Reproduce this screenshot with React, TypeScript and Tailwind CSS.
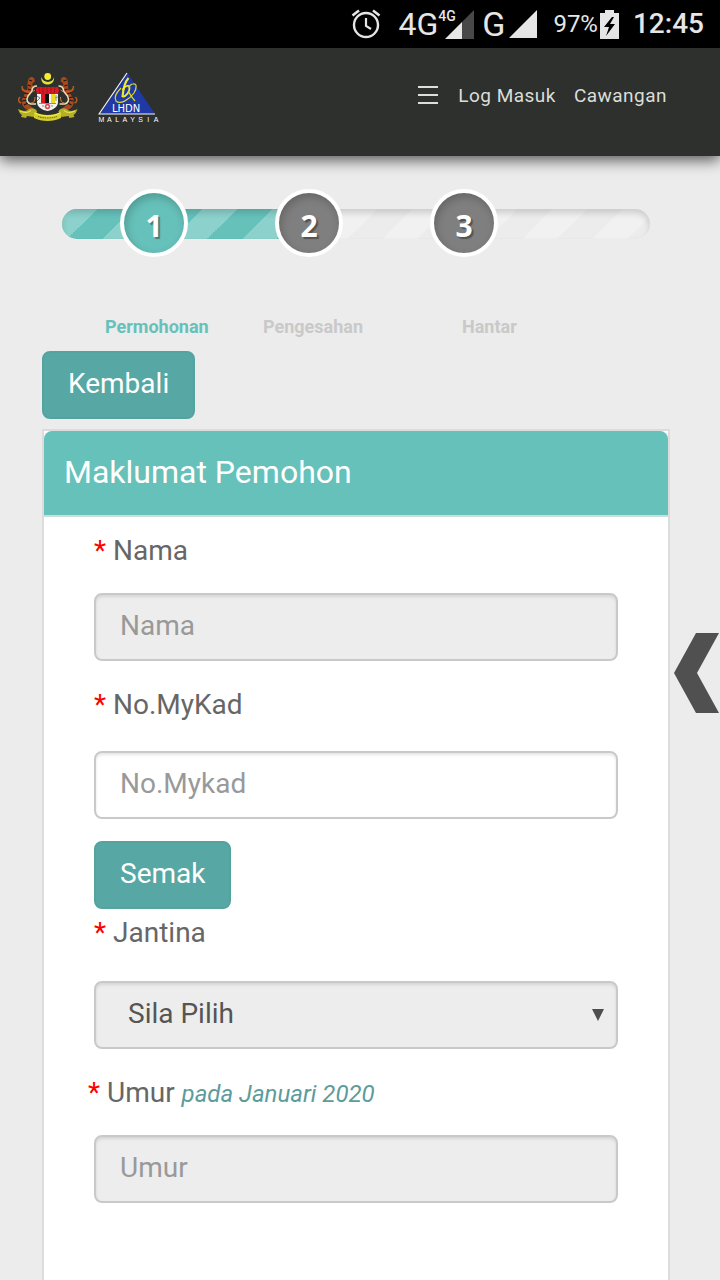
import type { ReactNode } from "react";

const STRIPES =
  "bg-[linear-gradient(135deg,rgba(255,255,255,0.25)_25%,transparent_25%,transparent_50%,rgba(255,255,255,0.25)_50%,rgba(255,255,255,0.25)_75%,transparent_75%)] bg-[length:70px_70px]";
const FIELD =
  "block h-[68px] w-full rounded-lg border-2 border-[#c9c9c9] text-[28px] shadow-[inset_0_2px_3px_rgba(0,0,0,0.1)] outline-none placeholder:text-[#999] placeholder:opacity-100";
const BUTTON =
  "h-[68px] rounded-lg border-2 border-[#54a39f] bg-[#57a7a4] px-6 pb-[2px] text-[28px] leading-10 text-white";

function AlarmIcon() {
  return (
    <svg className="h-8 w-8" viewBox="0 0 32 32" fill="none" stroke="#e6e6e6" aria-hidden="true">
      <circle cx="16" cy="17" r="12" strokeWidth="2.4" />
      <path d="M16 10v8l5 3" strokeWidth="2.2" />
      <path d="M2.5 7.500 9 2.500M29.500 7.500 23 2.500" strokeWidth="2.6" />
    </svg>
  );
}

function StatusBar() {
  return (
    <div className="flex h-12 items-center justify-end bg-black pr-4 text-[#e6e6e6]">
      <AlarmIcon />
      <div className="ml-4 flex h-9 items-center">
        <span className="text-[32px] leading-9">4G</span>
        <div className="relative h-[29px] w-9">
          <svg className="h-full w-9" viewBox="0 0 36 29" aria-hidden="true">
            <path d="M36 0v29H24V12z" fill="#484848" />
            <path d="M7 29 24 12v17z" fill="#e6e6e6" />
          </svg>
          <span className="absolute left-0 top-0 text-sm font-medium leading-3">4G</span>
        </div>
      </div>
      <span className="ml-2 text-[34px] leading-9">G</span>
      <svg className="ml-1 h-7 w-7" viewBox="0 0 28 28" aria-hidden="true">
        <path d="M28 0v28H0z" fill="#e6e6e6" />
      </svg>
      <span className="ml-4 text-2xl">97%</span>
      <svg className="ml-[2px] h-[29px] w-[19px]" viewBox="0 0 19 29" aria-hidden="true">
        <path d="M5 0h9v3h5v26H0V3h5z" fill="#e6e6e6" />
        <path d="M12 7 4 17h5l-3 9 9-12h-5l4-7z" fill="#000" />
      </svg>
      <span className="ml-[14px] text-[28px] font-medium">12:45</span>
    </div>
  );
}

function CoatOfArms() {
  return (
    <svg className="h-[52px] w-[60px]" viewBox="0 0 60 52" role="img" aria-label="Jata Negara">
      <path d="M23.500 5c-2 10 14 10 12.500 0-1 6.500-11 6.500-12.500 0z" fill="#e6e23a" />
      <circle cx="29.700" cy="4.500" r="3.400" fill="#f5ee30" />
      {[false, true].map((flip) => (
        <g key={String(flip)} transform={flip ? "translate(59.500 0) scale(-1 1)" : undefined}>
          <path d="M10 8c1-3 4-4 6-2l1 3-3 3c2 3 1 5-1 7l-5 7c-1 3 0 6 3 7l4 3-5 2c-5-2-7-6-6-11l4-7c-2 0-4-1-5-3l6 1c1-3 0-6 1-10z" fill="#a8481c" />
          <path d="m11 8 3 1m-4 4 3 1m-3 3 3 1m-6 3 4 1m-6 3 4 1m-5 3 5-1m-3 5 4-2" stroke="#20180f" strokeWidth="1.200" />
          <path d="M4 14c0 4 3 6 7 6M3 31c-3-1-3-4-1-6" stroke="#bd5b25" strokeWidth="1.400" fill="none" />
          <path d="M19 14c-3 0-5 2-5 5l-4 5c-2 4-1 7 3 8h5" stroke="#f0d9b8" strokeWidth="1.600" fill="none" />
          <path d="m14 20 3-2m-4 13c3 0 4-2 4-6" stroke="#d0854d" fill="none" />
        </g>
      ))}
      <path d="M19 22h21v8c0 5-5 8-10.500 9C24 38 19 35 19 30z" fill="#f4f3ef" />
      <path d="M19 15h21l1 3-1 4H19l-1-4z" fill="#dc1822" />
      <path d="m21 15 1 7m3-7v7m4-7v7m4-7v7m4-7-1 7" stroke="#8b161d" strokeWidth=".8" />
      <path d="m19 24 3 2-3 3" stroke="#5c8ba8" fill="none" />
      <path d="M23 22h4v9h-4z" fill="#dc1822" />
      <path d="M27 22h4v9h-4z" fill="#111" />
      <path d="M31 22h2v9h-2z" fill="#f8f8f8" />
      <path d="M33 22h4v9h-4z" fill="#eedc22" />
      <path d="m37 26 3-1m-2-2v6" stroke="#70936e" strokeWidth=".9" />
      <circle cx="29.500" cy="34.500" r="2.700" fill="#db4a56" />
      <circle cx="29.500" cy="34.500" r="1.100" fill="#fff" />
      <path d="M21 31.500h17M24 34h2m7 0h2" stroke="#76849c" strokeWidth=".9" />
      <path d="M0 37c4 2 8 3 11 0 3-2 8 0 8 3l-3 5-7-1-1 2-5-1 1-2c-2-1-3-3-4-6zM59.500 37c-4 2-8 3-11 0-3-2-8 0-8 3l3 5 7-1 1 2 5-1-1-2c2-1 3-3 4-6z" fill="#b6b026" />
      <path d="M16 40c9 4 18 4 27 0v6c-8 4-19 4-27 0z" fill="#d5cf28" />
      <path d="M2 39c5 2 8 2 11-.5m44 .5c-5 2-8 2-11-.5M17 41c9 4 17 4 25 0" stroke="#f2ec5a" fill="none" />
      <path d="M20 44.500c6 2 13 2 19 0" stroke="#706d16" strokeWidth="1.100" strokeDasharray="1.500 .8" fill="none" />
    </svg>
  );
}

function LhdnLogo() {
  return (
    <svg className="h-[52px] w-[62px]" viewBox="0 0 62 52" role="img" aria-label="LHDN Malaysia">
      <path d="M29.500 1 2 42h55z" fill="#2039a4" />
      <path d="M29 1 1 42h56" fill="none" stroke="#f5f6fa" strokeWidth="1.200" />
      <path d="M30.500 6C26 11 25 19 24.500 25" fill="none" stroke="#f1eb28" strokeWidth="2.200" />
      <path d="M24.500 18c2-4 7-6 7-2 0 4-3 8-7 9" fill="none" stroke="#f1eb28" strokeWidth="1.800" />
      <path d="M23 16c-5 5-7 10-5 13 4 4 13-1 18-8 3-5 3-10-1-9-2 0-4 2-4 4" fill="none" stroke="#dcd927" strokeWidth="1.200" />
      <path d="M30 19c2 3 4 7 7 10" fill="none" stroke="#dcd927" strokeWidth="1.300" />
      <text x="14" y="40" fontFamily="DejaVu Sans, sans-serif" fontSize="10" fill="#fff">LHDN</text>
      <g fontFamily="Liberation Sans, sans-serif" fontSize="7" fill="#fff" textAnchor="middle">
        {"MALAYSIA".split("").map((letter, i) => (
          <text key={i} x={3.5 + i * 7.8} y="50">{letter}</text>
        ))}
      </g>
    </svg>
  );
}

function Header() {
  return (
    <header className="flex h-[108px] items-start justify-between bg-[#2d302c] pl-[18px] pr-[53px] pt-6 text-[#dcded9] shadow-[0_4px_14px_rgba(0,0,0,0.65)]">
      <div className="flex gap-5">
        <CoatOfArms />
        <LhdnLogo />
      </div>
      <nav className="flex h-12 items-center gap-[18px] text-[19px] tracking-wide">
        <button type="button" aria-label="Menu" className="mr-[2px]">
          <svg className="h-5 w-5" viewBox="0 0 20 20" stroke="currentColor" strokeWidth="2" aria-hidden="true">
            <path d="M0 1h20M0 9h20M0 17h20" />
          </svg>
        </button>
        <a href="#log-masuk">Log Masuk</a>
        <a href="#cawangan">Cawangan</a>
      </nav>
    </header>
  );
}

function Stepper() {
  return (
    <section aria-label="Langkah" className="pt-[33px]">
      <div className="ml-5 mr-5 grid items-center">
        <div className={`col-start-1 row-start-1 mt-[2px] h-[30px] overflow-hidden rounded-full ${STRIPES} shadow-[inset_0_4px_6px_rgba(0,0,0,0.15)]`}>
          <div className={`h-full w-[42%] bg-[#66c1ba] ${STRIPES} shadow-[inset_0_4px_6px_rgba(0,0,0,0.15)]`} />
        </div>
        <ol className="col-start-1 row-start-1 flex pl-[58px] font-['Open_Sans',sans-serif] text-[30px] font-bold text-white">
          {[1, 2, 3].map((n) => (
            <li key={n} className="w-[155px]">
              <span
                className={`flex h-[68px] w-[68px] items-center justify-center rounded-full border-4 border-white pt-[6px] leading-10 shadow-[inset_2px_4px_8px_rgba(0,0,0,0.2)] [text-shadow:2px_2px_1px_rgba(0,0,0,0.35)] ${n === 1 ? "bg-[#66c1ba]" : "bg-[#7f7f7f]"}`}
              >
                {n}
              </span>
            </li>
          ))}
        </ol>
      </div>
      <div className="mt-14 flex pl-[63px] text-lg font-bold leading-7 text-[#c9c9c9]">
        <span className="w-[158px] text-[#66c1ba]">Permohonan</span>
        <span className="w-[199px]">Pengesahan</span>
        <span>Hantar</span>
      </div>
    </section>
  );
}

function Label({ htmlFor, className = "", children }: { htmlFor: string; className?: string; children: ReactNode }) {
  return (
    <label htmlFor={htmlFor} className={`block text-[28px] leading-10 text-[#666] ${className}`}>
      <span className="text-[#f00]">*</span> {children}
    </label>
  );
}

export default function App() {
  return (
    <div className="relative flex min-h-screen flex-col bg-[#ececec] font-['Roboto',sans-serif]">
      <StatusBar />
      <Header />
      <main className="flex flex-1 flex-col pl-[42px] pr-[50px]">
        <Stepper />
        <button type="button" className={`mt-[10px] self-start ${BUTTON}`}>Kembali</button>
        <section className="mt-[10px] flex-1 border-2 border-b-0 border-[#dcdcdc] bg-white">
          <h1 className="rounded-t-lg border-b-2 border-[#ccdedc] bg-[#66c1ba] px-5 pb-[22px] pt-5 text-[32px] leading-[42px] text-white">
            Maklumat Pemohon
          </h1>
          <form className="px-[50px] pt-[14px]" onSubmit={(e) => e.preventDefault()}>
            <Label htmlFor="nama">Nama</Label>
            <input id="nama" placeholder="Nama" readOnly className={`mt-[22px] bg-[#ededed] px-6 pb-1 ${FIELD}`} />
            <Label htmlFor="mykad" className="mt-6">No.MyKad</Label>
            <input id="mykad" placeholder="No.Mykad" className={`mt-[26px] bg-white px-6 pb-1 ${FIELD}`} />
            <button type="button" className={`mt-[22px] block ${BUTTON}`}>Semak</button>
            <Label htmlFor="jantina" className="mt-1">Jantina</Label>
            <div className="relative mt-7">
              <select id="jantina" className={`appearance-none bg-[#ededed] px-8 pb-[2px] text-[#555] ${FIELD}`}>
                <option>Sila Pilih</option>
              </select>
              <svg className="pointer-events-none absolute right-[14px] top-7 h-3 w-3" viewBox="0 0 12 12" aria-hidden="true">
                <path d="M0 0h12L6 12z" fill="#4e4e4e" />
              </svg>
            </div>
            <Label htmlFor="umur" className="-ml-[6px] mt-6">
              Umur <em className="text-2xl text-[#5c9c9b]">pada Januari 2020</em>
            </Label>
            <input id="umur" placeholder="Umur" readOnly className={`mt-[22px] bg-[#ededed] px-6 pb-1 ${FIELD}`} />
          </form>
        </section>
      </main>
      <button type="button" aria-label="Buka panel" className="fixed right-px top-[633px]">
        <svg className="block h-20 w-[45px]" viewBox="0 0 45 80" aria-hidden="true">
          <path d="M22 0h23L23 40l22 40H22L0 40z" fill="#505050" />
        </svg>
      </button>
    </div>
  );
}
